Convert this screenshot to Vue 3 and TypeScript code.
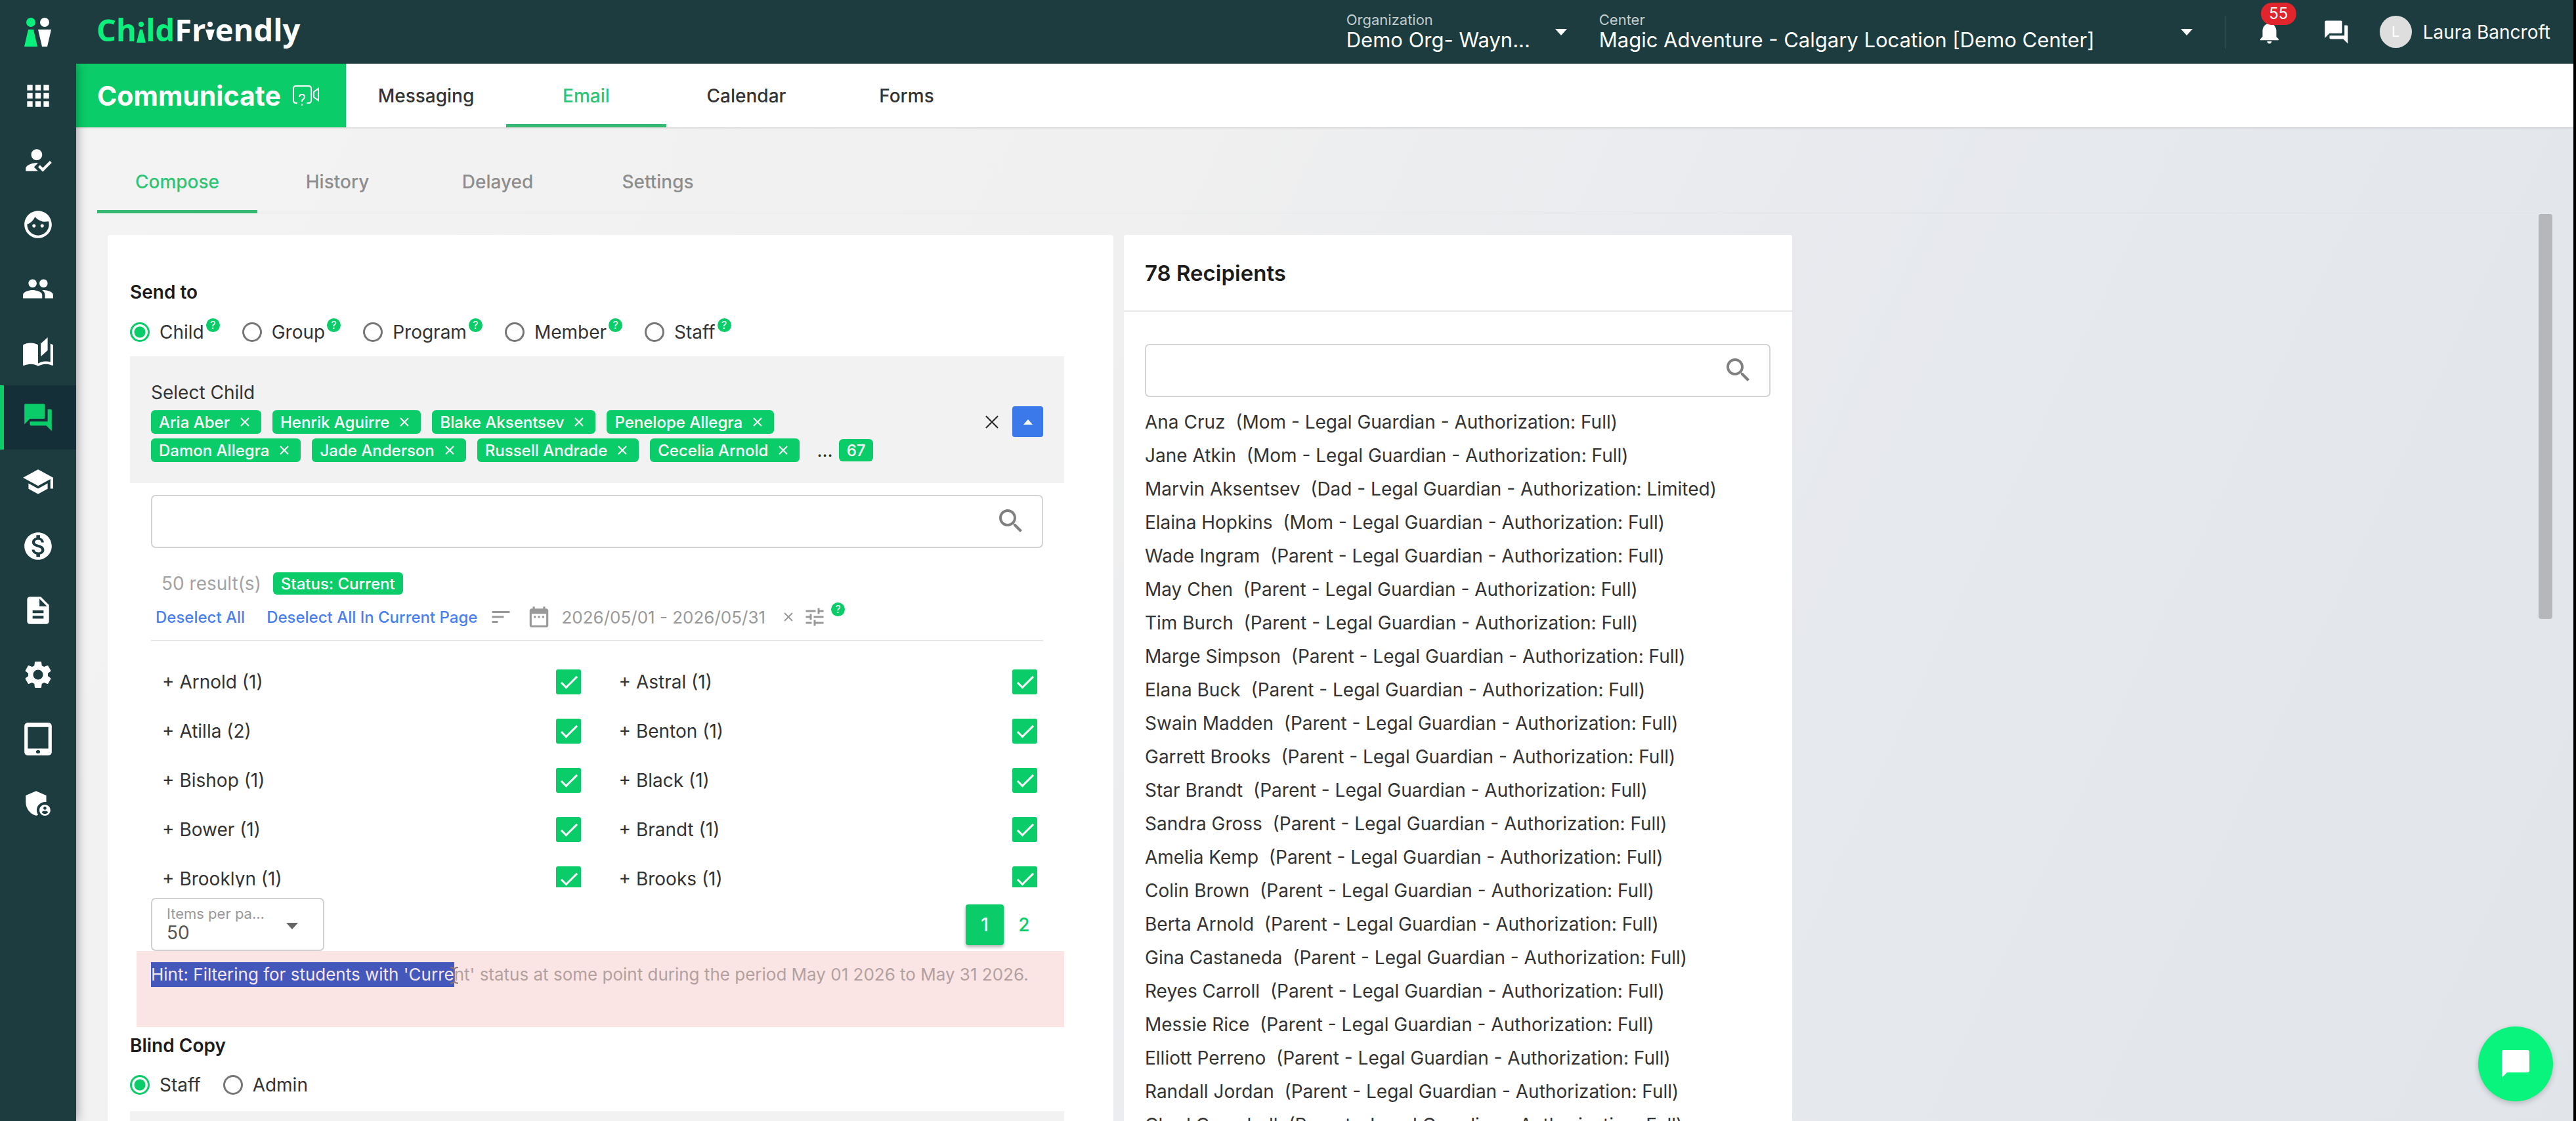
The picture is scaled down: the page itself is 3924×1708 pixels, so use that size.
<script setup lang="ts">
import { ref } from 'vue'

interface NavItem {
  name: string
  path: string
}

const navItems: NavItem[] = [
  { name: 'Apps', path: 'M4 4h4v4H4zM10 4h4v4h-4zM16 4h4v4h-4zM4 10h4v4H4zM10 10h4v4h-4zM16 10h4v4h-4zM4 16h4v4H4zM10 16h4v4h-4zM16 16h4v4h-4z' },
  { name: 'Attendance', path: 'M9 17l3-2.94c-.39-.04-.68-.06-1-.06-2.67 0-8 1.34-8 4v2h9l-3-3zm2-5c2.21 0 4-1.79 4-4s-1.79-4-4-4-4 1.79-4 4 1.79 4 4 4zM15.47 20.5L12 17l1.4-1.41 2.07 2.08 5.13-5.17 1.4 1.41z' },
  { name: 'Children', path: 'M10.25 13c0 .69-.56 1.25-1.25 1.25S7.75 13.69 7.75 13s.56-1.25 1.25-1.25 1.25.56 1.25 1.25zM15 11.75c-.69 0-1.25.56-1.25 1.25s.56 1.25 1.25 1.25 1.25-.56 1.25-1.25-.56-1.25-1.25-1.25zm7 .25c0 5.52-4.48 10-10 10S2 17.52 2 12 6.48 2 12 2s10 4.48 10 10zm-2 0c0-.78-.12-1.53-.33-2.24-.7.15-1.42.24-2.17.24-3.13 0-5.92-1.44-7.76-3.69C8.69 8.87 6.6 10.88 4 11.86c.01.04 0 .09 0 .14 0 4.41 3.59 8 8 8s8-3.59 8-8z' },
  { name: 'People', path: 'M16 11c1.66 0 2.99-1.34 2.99-3S17.66 5 16 5c-1.66 0-3 1.34-3 3s1.34 3 3 3zm-8 0c1.66 0 2.99-1.34 2.99-3S9.66 5 8 5C6.34 5 5 6.34 5 8s1.34 3 3 3zm0 2c-2.33 0-7 1.17-7 3.5V19h14v-2.5c0-2.33-4.67-3.5-7-3.5zm8 0c-.29 0-.62.02-.97.05 1.16.84 1.97 1.97 1.97 3.45V19h6v-2.5c0-2.33-4.67-3.5-7-3.5z' },
  { name: 'Curriculum', path: 'M19 .5l-5 4.5v9.5l5-4.5V.5zM1 6v14.65c0 .25.25.5.5.5.1 0 .15-.05.25-.05C3.1 20.45 5.05 20 6.5 20c1.95 0 4.05.4 5.5 1.5V6c-1.45-1.1-3.55-1.5-5.5-1.5-1.95 0-4.05.4-5.5 1.5zm22 13.5V6c-.6-.45-1.25-.75-2-1v13.5c-1.1-.35-2.3-.5-3.5-.5-1.7 0-4.15.65-5.5 1.5v2c1.35-.85 3.8-1.5 5.5-1.5 1.65 0 3.35.3 4.75 1.05.1.05.15.05.25.05.25 0 .5-.25.5-.5v-1.1z' },
  { name: 'Communicate', path: 'M21 6h-2v9H6v2c0 .55.45 1 1 1h11l4 4V7c0-.55-.45-1-1-1zm-4 6V3c0-.55-.45-1-1-1H3c-.55 0-1 .45-1 1v14l4-4h10c.55 0 1-.45 1-1z' },
  { name: 'School', path: 'M5 13.18v4L12 21l7-3.82v-4L12 17l-7-3.82zM12 3L1 9l11 6 9-4.91V17h2V9L12 3z' },
  { name: 'Billing', path: 'M12 2C6.48 2 2 6.48 2 12s4.48 10 10 10 10-4.48 10-10S17.52 2 12 2zm1.41 16.09V20h-2.67v-1.93c-1.71-.36-3.16-1.46-3.27-3.4h1.96c.1 1.05.82 1.87 2.65 1.87 1.96 0 2.4-.98 2.4-1.59 0-.83-.44-1.61-2.67-2.14-2.48-.6-4.18-1.62-4.18-3.67 0-1.72 1.39-2.84 3.11-3.21V4h2.67v1.95c1.86.45 2.79 1.86 2.85 3.39H14.3c-.05-1.11-.64-1.87-2.22-1.87-1.5 0-2.4.68-2.4 1.64 0 .84.65 1.39 2.67 1.91s4.18 1.39 4.18 3.91c-.01 1.83-1.38 2.83-3.12 3.16z' },
  { name: 'Documents', path: 'M14 2H6c-1.1 0-1.99.9-1.99 2L4 20c0 1.1.89 2 1.99 2H18c1.1 0 2-.9 2-2V8l-6-6zm2 16H8v-2h8v2zm0-4H8v-2h8v2zm-3-5V3.5L18.5 9H13z' },
  { name: 'Settings', path: 'M19.14 12.94c.04-.3.06-.61.06-.94 0-.32-.02-.64-.07-.94l2.03-1.58c.18-.14.23-.41.12-.61l-1.92-3.32c-.12-.22-.37-.29-.59-.22l-2.39.96c-.5-.38-1.03-.7-1.62-.94l-.36-2.54c-.04-.24-.24-.41-.48-.41h-3.84c-.24 0-.43.17-.47.41l-.36 2.54c-.59.24-1.13.57-1.62.94l-2.39-.96c-.22-.08-.47 0-.59.22L2.74 8.87c-.12.21-.08.47.12.61l2.03 1.58c-.05.3-.09.63-.09.94s.02.64.07.94l-2.03 1.58c-.18.14-.23.41-.12.61l1.92 3.32c.12.22.37.29.59.22l2.39-.96c.5.38 1.03.7 1.62.94l.36 2.54c.05.24.24.41.48.41h3.84c.24 0 .44-.17.47-.41l.36-2.54c.59-.24 1.13-.56 1.62-.94l2.39.96c.22.08.47 0 .59-.22l1.92-3.32c.12-.22.07-.47-.12-.61l-2.01-1.58zM12 15.6c-1.98 0-3.6-1.62-3.6-3.6s1.62-3.6 3.6-3.6 3.6 1.62 3.6 3.6-1.62 3.6-3.6 3.6z' },
  { name: 'Kiosk', path: 'M19.5 0h-15C3.1 0 2 1.1 2 2.5v19C2 22.9 3.1 24 4.5 24h15c1.4 0 2.5-1.1 2.5-2.5v-19C22 1.1 20.9 0 19.5 0zM12 22.6c-.8 0-1.5-.5-1.5-1.3S11.2 20 12 20s1.5.5 1.5 1.3-.7 1.3-1.5 1.3zM19.5 19h-15V3.2h15z' },
  { name: 'Admin', path: 'M17 11c.34 0 .67.04 1 .09V6.27L10.5 3 3 6.27v4.91c0 4.54 3.2 8.79 7.5 9.82.55-.13 1.08-.32 1.6-.55-.69-.98-1.1-2.17-1.1-3.45 0-3.31 2.69-6 6-6zM17 13c-2.21 0-4 1.79-4 4s1.79 4 4 4 4-1.79 4-4-1.79-4-4-4zm0 1.38c.62 0 1.12.51 1.12 1.12s-.51 1.12-1.12 1.12-1.12-.51-1.12-1.12.5-1.12 1.12-1.12zm0 5.37c-.93 0-1.74-.46-2.24-1.17.05-.72 1.51-1.08 2.24-1.08s2.19.36 2.24 1.08c-.5.71-1.31 1.17-2.24 1.17z' },
]

const forumPath = navItems[5].path
const bellPath = 'M12 22c1.1 0 2-.9 2-2h-4c0 1.1.89 2 2 2zm6-6v-5c0-3.07-1.64-5.64-4.5-6.32V4c0-.83-.67-1.5-1.5-1.5s-1.5.67-1.5 1.5v.68C7.63 5.36 6 7.92 6 11v5l-2 2v1h16v-1l-2-2z'
const searchPath = 'M15.5 14h-.79l-.28-.27C15.41 12.59 16 11.11 16 9.5 16 5.91 13.09 3 9.5 3S3 5.91 3 9.5 5.91 16 9.5 16c1.61 0 3.09-.59 4.23-1.57l.27.28v.79l5 4.99L20.49 19l-4.99-5zm-6 0C7.01 14 5 11.99 5 9.5S7.01 5 9.5 5 14 7.01 14 9.5 11.99 14 9.5 14z'
const calendarPath = 'M9 11H7v2h2v-2zm4 0h-2v2h2v-2zm4 0h-2v2h2v-2zm2-7h-1V2h-2v2H8V2H6v2H5c-1.11 0-1.99.9-1.99 2L3 20c0 1.1.89 2 2 2h14c1.1 0 2-.9 2-2V6c0-1.1-.9-2-2-2zm0 16H5V9h14v11z'
const tunePath = 'M3 17v2h6v-2H3zM3 5v2h10V5H3zm10 16v-2h8v-2h-8v-2h-2v6h2zM7 9v2H3v2h4v2h2V9H7zm14 4v-2H11v2h10zm-6-4h2V7h4V5h-4V3h-2v6z'

const mainTabs = ['Messaging', 'Email', 'Calendar', 'Forms']
const subTabs = ['Compose', 'History', 'Delayed', 'Settings']
const sendOptions = ['Child', 'Group', 'Program', 'Member', 'Staff']
const copyOptions = ['Staff', 'Admin']
const sendTo = ref('Child')
const copyTo = ref('Staff')

const chipRows = [
  ['Aria Aber', 'Henrik Aguirre', 'Blake Aksentsev', 'Penelope Allegra'],
  ['Damon Allegra', 'Jade Anderson', 'Russell Andrade', 'Cecelia Arnold'],
]

const families = ref(
  ['Arnold (1)', 'Astral (1)', 'Atilla (2)', 'Benton (1)', 'Bishop (1)', 'Black (1)', 'Bower (1)', 'Brandt (1)', 'Brooklyn (1)', 'Brooks (1)']
    .map((label) => ({ label, checked: true })),
)

const recipients: [string, string, string][] = [
  ['Ana Cruz', 'Mom', 'Full'],
  ['Jane Atkin', 'Mom', 'Full'],
  ['Marvin Aksentsev', 'Dad', 'Limited'],
  ['Elaina Hopkins', 'Mom', 'Full'],
  ['Wade Ingram', 'Parent', 'Full'],
  ['May Chen', 'Parent', 'Full'],
  ['Tim Burch', 'Parent', 'Full'],
  ['Marge Simpson', 'Parent', 'Full'],
  ['Elana Buck', 'Parent', 'Full'],
  ['Swain Madden', 'Parent', 'Full'],
  ['Garrett Brooks', 'Parent', 'Full'],
  ['Star Brandt', 'Parent', 'Full'],
  ['Sandra Gross', 'Parent', 'Full'],
  ['Amelia Kemp', 'Parent', 'Full'],
  ['Colin Brown', 'Parent', 'Full'],
  ['Berta Arnold', 'Parent', 'Full'],
  ['Gina Castaneda', 'Parent', 'Full'],
  ['Reyes Carroll', 'Parent', 'Full'],
  ['Messie Rice', 'Parent', 'Full'],
  ['Elliott Perreno', 'Parent', 'Full'],
  ['Randall Jordan', 'Parent', 'Full'],
  ['Chad Campbell', 'Parent', 'Full'],
]
</script>

<template>
  <div class="shell">
    <header class="topbar">
      <a class="mark" href="#" aria-label="Home">
        <svg viewBox="0 0 42 44">
          <circle cx="10" cy="7" r="7" fill="#0bf07c" />
          <path d="M6 18h8l6 26H0z" fill="#0bf07c" />
          <circle cx="31" cy="7" r="7" fill="#fff" />
          <path d="M21 18h20l-6 26h-8z" fill="#fff" />
        </svg>
      </a>
      <a class="wordmark" href="#">
        <span class="green">Ch<span class="figure">i<svg viewBox="0 0 14 32"><circle cx="7" cy="4" r="4" /><path d="M5 12h4l5 20H0z" /></svg></span>ld</span><span>Fr<span class="figure">i<svg viewBox="0 0 14 32"><circle cx="7" cy="4" r="4" /><path d="M0 12h14L9 28H5z" /></svg></span>endly</span>
      </a>

      <div class="field org">
        <label for="org">Organization</label>
        <select id="org"><option>Demo Org- Wayn...</option></select>
        <svg class="caret" viewBox="0 0 18 10"><path d="M0 0h18l-9 10z" /></svg>
      </div>
      <div class="field center">
        <label for="center">Center</label>
        <select id="center"><option>Magic Adventure - Calgary Location [Demo Center]</option></select>
        <svg class="caret" viewBox="0 0 18 10"><path d="M0 0h18l-9 10z" /></svg>
      </div>
      <div class="rule"></div>
      <button class="icon-btn bell" type="button" aria-label="Notifications">
        <svg viewBox="0 0 24 24"><path :d="bellPath" /></svg>
        <span class="count">55</span>
      </button>
      <button class="icon-btn" type="button" aria-label="Messages">
        <svg viewBox="0 0 24 24"><path :d="forumPath" /></svg>
      </button>
      <a class="user" href="#"><span class="avatar">L</span>Laura Bancroft</a>
    </header>

    <div class="body">
      <nav class="sidebar">
        <a v-for="item in navItems" :key="item.name" href="#" :aria-label="item.name" :class="{ active: item.name === 'Communicate' }">
          <svg viewBox="0 0 24 24"><path :d="item.path" fill-rule="evenodd" /></svg>
        </a>
      </nav>

      <div class="page">
        <div class="module-bar">
          <h1>
            Communicate
            <svg viewBox="0 0 42 34" fill="none" stroke="currentColor" stroke-width="2">
              <path d="M8 28H6q-4 0-4-4V6q0-4 4-4h19q4 0 4 4v18q0 4-4 4h-3" />
              <path d="M40 6v18l-7-5v-8z" />
              <path d="M11 19q0-4 4-4t4 4q0 2-2 3t-2 4M15 29v3" />
            </svg>
          </h1>
          <a v-for="tab in mainTabs" :key="tab" href="#" class="tab" :class="{ active: tab === 'Email' }">{{ tab }}</a>
        </div>

        <div class="sub-bar">
          <a v-for="tab in subTabs" :key="tab" href="#" class="tab" :class="{ active: tab === 'Compose' }">{{ tab }}</a>
        </div>

        <main class="columns">
          <section class="card compose">
            <h2>Send to</h2>
            <div class="radios">
              <div v-for="option in sendOptions" :key="option" class="radio">
                <input :id="'to-' + option" v-model="sendTo" type="radio" name="send-to" :value="option">
                <label :for="'to-' + option">{{ option }}</label>
                <span class="help">?</span>
              </div>
            </div>

            <div class="picker">
              <div class="picked">
                <div class="picker-title">Select Child</div>
                <div v-for="(row, index) in chipRows" :key="index" class="chips">
                  <span v-for="chip in row" :key="chip" class="chip">
                    {{ chip }}
                    <button type="button" :aria-label="'Remove ' + chip"><svg viewBox="0 0 14 14"><path d="M1 1l12 12M13 1L1 13" /></svg></button>
                  </span>
                  <template v-if="index === 1">
                    <span class="dots">...</span>
                    <span class="chip total">67</span>
                  </template>
                </div>
              </div>
              <button class="clear" type="button" aria-label="Clear all"><svg viewBox="0 0 20 20"><path d="M1 1l18 18M19 1L1 19" /></svg></button>
              <button class="toggle" type="button" aria-label="Collapse"><svg viewBox="0 0 14 8"><path d="M7 0l7 8H0z" /></svg></button>
            </div>

            <div class="inner">
              <div class="search">
                <input type="text" aria-label="Search children">
                <svg viewBox="0 0 24 24"><path :d="searchPath" /></svg>
              </div>
              <div class="results">
                <span>50 result(s)</span>
                <span class="chip status">Status: Current</span>
              </div>
              <div class="actions">
                <a href="#">Deselect All</a>
                <a href="#" class="page-link">Deselect All In Current Page</a>
                <svg class="sort" viewBox="0 0 24 24"><path d="M3 18h6v-2H3v2zM3 6v2h18V6H3zm0 7h12v-2H3v2z" /></svg>
                <svg class="calendar" viewBox="0 0 24 24"><path :d="calendarPath" /></svg>
                <span class="dates">2026/05/01 - 2026/05/31</span>
                <svg class="cross" viewBox="0 0 14 14"><path d="M1 1l12 12M13 1L1 13" /></svg>
                <svg class="tune" viewBox="0 0 24 24"><path :d="tunePath" /></svg>
                <span class="help">?</span>
              </div>
              <div class="families">
                <div v-for="(family, index) in families" :key="family.label" class="family">
                  <label :for="'family-' + index">+ {{ family.label }}</label>
                  <input :id="'family-' + index" v-model="family.checked" type="checkbox">
                </div>
              </div>
              <div class="paging">
                <div class="per-page">
                  <label for="per-page">Items per pa...</label>
                  <select id="per-page"><option>50</option></select>
                  <svg class="caret" viewBox="0 0 18 10"><path d="M0 0h18l-9 10z" /></svg>
                </div>
                <button class="current" type="button">1</button>
                <button type="button">2</button>
              </div>
            </div>

            <p class="hint">
              <span class="selected">Hint: Filtering for students with 'Curre<svg class="ibeam" viewBox="0 0 14 26"><path d="M1 1q6 0 6 4v16q0 4-6 4M13 1q-6 0-6 4v16q0 4 6 4" /></svg></span>nt' status at some point during the period May 01 2026 to May 31 2026.
            </p>

            <h2 class="blind">Blind Copy</h2>
            <div class="radios">
              <div v-for="option in copyOptions" :key="option" class="radio">
                <input :id="'copy-' + option" v-model="copyTo" type="radio" name="copy-to" :value="option">
                <label :for="'copy-' + option">{{ option }}</label>
              </div>
            </div>
            <div class="picker next"></div>
          </section>

          <section class="card recipients">
            <h2>78 Recipients</h2>
            <div class="recipient-body">
              <div class="search">
                <input type="text" aria-label="Search recipients">
                <svg viewBox="0 0 24 24"><path :d="searchPath" /></svg>
              </div>
              <ul>
                <li v-for="[name, role, level] in recipients" :key="name">{{ name }}&nbsp; ({{ role }} - Legal Guardian - Authorization: {{ level }})</li>
              </ul>
            </div>
          </section>
        </main>
        <div class="scroll-thumb"></div>
      </div>
    </div>

    <button class="fab" type="button" aria-label="Open chat">
      <svg viewBox="0 0 42 42"><path d="M3 0h36q3 0 3 3v28q0 3-3 3H8l-8 8V3q0-3 3-3z" /></svg>
    </button>
  </div>
</template>

<style>
body {
  background: #000;
}
</style>

<style scoped>
.shell {
  position: relative;
  display: flex;
  flex-direction: column;
  height: 100vh;
  margin-right: 4px;
  overflow: hidden;
  font-family: Inter, "Liberation Sans", sans-serif;
  font-size: 28px;
  color: #333;
}
.shell *,
.shell *::before {
  box-sizing: border-box;
}
svg {
  display: block;
  flex: none;
  fill: currentColor;
}
a {
  color: inherit;
  text-decoration: none;
}
button {
  padding: 0;
  border: 0;
  background: none;
  font: inherit;
  color: inherit;
}
select {
  appearance: none;
  border: 0;
  padding: 0;
  width: 100%;
  background: none;
  font: inherit;
  color: inherit;
}
h1, h2, p, ul {
  margin: 0;
  padding: 0;
}

/* Top bar */
.topbar {
  display: flex;
  align-items: center;
  flex: none;
  height: 97px;
  padding-right: 35px;
  background: #1c3c40;
  color: #fff;
}
.mark {
  width: 147px;
  padding-left: 37px;
}
.mark svg {
  width: 42px;
  height: 44px;
}
.wordmark {
  margin-right: auto;
  padding-bottom: 8px;
  font: 700 47px/64px "Open Sans", "Noto Sans", sans-serif;
}
.wordmark .green {
  color: #0bf07c;
}
.figure {
  position: relative;
  -webkit-text-fill-color: transparent;
}
.figure svg {
  position: absolute;
  left: 0;
  bottom: 12px;
  width: 14px;
  height: 32px;
}
.field {
  position: relative;
  margin-right: 49px;
}
.field.org {
  width: 336px;
}
.field.center {
  width: 904px;
}
.field label {
  display: block;
  font-size: 22px;
  line-height: 24px;
  color: #c3cdce;
}
.field select {
  display: block;
  height: 38px;
  font-size: 31px;
}
.caret {
  position: absolute;
  width: 18px;
  height: 10px;
  pointer-events: none;
}
.field .caret {
  right: 0;
  top: 26px;
}
.rule {
  width: 1px;
  height: 50px;
  margin-right: 46px;
  background: #3f5b5e;
}
.icon-btn {
  position: relative;
  margin-right: 60px;
}
.icon-btn svg {
  width: 42px;
  height: 42px;
}
.icon-btn + .user {
  margin-left: -15px;
}
.count {
  position: absolute;
  left: 8px;
  top: -24px;
  width: 54px;
  height: 34px;
  border-radius: 17px;
  background: #e0252c;
  font-size: 24px;
  line-height: 34px;
}
.user {
  display: flex;
  align-items: center;
  gap: 17px;
}
.avatar {
  width: 49px;
  height: 49px;
  border-radius: 50%;
  background: #dedede;
  font-size: 22px;
  line-height: 49px;
  text-align: center;
}

/* Sidebar */
.body {
  display: flex;
  flex: 1;
  min-height: 0;
}
.sidebar {
  position: relative;
  z-index: 1;
  flex: none;
  width: 116px;
  background: #1c3c40;
  color: #fff;
  box-shadow: 0 0 16px rgba(0, 0, 0, 0.4);
  clip-path: inset(0 -30px 0 0);
}
.sidebar a {
  display: flex;
  align-items: center;
  justify-content: center;
  height: 98px;
}
.sidebar svg {
  width: 50px;
  height: 50px;
}
.sidebar .active {
  border-left: 6px solid #0acc69;
  padding-right: 6px;
  background: #152f38;
  color: #0acc69;
}

/* Tabs */
.page {
  position: relative;
  flex: 1;
  min-width: 0;
  background: linear-gradient(115deg, #f3f3f3 0%, #f0f0f0 38%, #e8eaee 60%, #e1e5ea 100%);
}
.module-bar,
.sub-bar {
  display: flex;
}
.module-bar {
  height: 97px;
  background: #fff;
  box-shadow: 0 1px 3px rgba(0, 0, 0, 0.15);
}
h1 {
  display: flex;
  align-items: center;
  gap: 17px;
  width: 411px;
  padding-left: 32px;
  background: #0acc69;
  color: #fff;
  font-size: 41px;
  font-weight: 700;
}
h1 svg {
  width: 42px;
  height: 34px;
  fill: none;
}
.tab {
  display: flex;
  align-items: center;
  justify-content: center;
  width: 244px;
  border-bottom: 5px solid transparent;
  padding-top: 5px;
  font-weight: 500;
}
.tab.active {
  border-color: #34b872;
  color: #2fc474;
}
.sub-bar {
  height: 131px;
  margin: 0 48px 0 32px;
  border-bottom: 1px solid #dfe1e3;
}
.sub-bar .tab {
  height: 131px;
  padding-top: 40px;
  color: #8d8d8d;
}
.sub-bar .tab.active {
  color: #2fc474;
}

/* Cards */
.columns {
  display: grid;
  grid-template-columns: 1532fr 1018fr 1126fr;
  gap: 16px;
  padding: 33px 48px 0;
}
.card {
  border-radius: 4px;
  background: #fff;
}
.compose {
  padding: 67px 75px 0 34px;
}
h2 {
  font-size: 28px;
  line-height: 40px;
  font-weight: 600;
  color: #1c1c1c;
}
.radios {
  display: flex;
  gap: 34px;
  height: 34px;
  margin-top: 24px;
}
.radio {
  display: flex;
  align-items: center;
}
.radio input {
  appearance: none;
  width: 30px;
  height: 30px;
  margin: 0 15px 0 0;
  border: 3px solid #777;
  border-radius: 50%;
}
.radio input:checked {
  border-color: #0acc69;
  background: radial-gradient(circle, #0acc69 8px, transparent 9px);
}
.help {
  align-self: flex-start;
  width: 21px;
  height: 21px;
  margin-left: 3px;
  border-radius: 50%;
  background: #0acc69;
  color: #fff;
  font-size: 16px;
  line-height: 21px;
  text-align: center;
}
.radio .help {
  margin-top: -4px;
}
.picker {
  display: flex;
  align-items: center;
  margin-top: 20px;
  padding: 38px 32px;
  padding-bottom: 32px;
  background: #f2f2f2;
}
.picked {
  flex: 1;
}
.picker-title {
  line-height: 34px;
  margin-bottom: 10px;
}
.chips {
  display: flex;
  align-items: center;
  gap: 17px;
}
.chips + .chips {
  margin-top: 7px;
}
.chip {
  display: flex;
  align-items: center;
  gap: 16px;
  height: 36px;
  padding: 0 18px 0 12px;
  border-radius: 6px;
  background: #0acc69;
  color: #fff;
  font-size: 24px;
  font-weight: 500;
}
.chip svg {
  width: 14px;
  height: 14px;
}
.chip path,
.clear path,
.cross path {
  fill: none;
  stroke: currentColor;
  stroke-width: 2;
}
.chip.total,
.chip.status {
  height: 34px;
  padding: 0 12px;
}
.chip.total {
  margin-left: -8px;
}
.dots {
  margin-left: 9px;
}
.clear {
  margin-right: 21px;
  color: #222;
}
.clear svg {
  width: 20px;
  height: 20px;
}
.toggle {
  display: grid;
  place-items: center;
  width: 47px;
  height: 47px;
  border-radius: 4px;
  background: #3b78e9;
  color: #fff;
}
.toggle svg {
  width: 14px;
  height: 8px;
}
.inner {
  margin: 18px 32px 0;
}
.search {
  position: relative;
  height: 81px;
}
.search input {
  display: block;
  width: 100%;
  height: 100%;
  border: 2px solid #d4d4d4;
  border-radius: 7px;
  background: #fff;
  padding: 0 80px 0 20px;
  font: inherit;
}
.search svg {
  position: absolute;
  right: 25px;
  top: 16px;
  width: 48px;
  height: 48px;
  color: #808080;
}
.results {
  display: flex;
  align-items: center;
  gap: 18px;
  margin-top: 37px;
  padding-left: 16px;
  color: #a3a3a3;
}
.actions {
  display: flex;
  align-items: center;
  height: 55px;
  margin-top: 16px;
  padding: 0 0 17px 7px;
  border-bottom: 2px solid #e6e6e6;
  color: #999;
}
.actions a {
  font-size: 24px;
  font-weight: 500;
  color: #4a80ee;
}
.page-link {
  margin-left: 33px;
}
.sort {
  width: 36px;
  height: 36px;
  margin-left: 18px;
}
.calendar {
  width: 38px;
  height: 38px;
  margin-left: 21px;
}
.dates {
  margin-left: 15px;
  font-size: 26px;
}
.cross {
  width: 14px;
  height: 14px;
  margin-left: 28px;
}
.tune {
  width: 36px;
  height: 36px;
  margin-left: 15px;
}
.actions .help {
  margin-top: -4px;
  margin-left: 7px;
}
.families {
  display: grid;
  grid-template-columns: 1fr 1fr;
  grid-auto-rows: 75px;
  column-gap: 58px;
  height: 375px;
  padding: 24px 9px 0 17px;
  overflow: hidden;
}
.family {
  display: flex;
  align-items: center;
  justify-content: space-between;
}
.family input {
  appearance: none;
  position: relative;
  width: 38px;
  height: 38px;
  margin: 0;
  border: 2px solid #0acc69;
  border-radius: 3px;
}
.family input:checked {
  background: #0acc69;
}
.family input:checked::before {
  content: "";
  position: absolute;
  left: 12px;
  top: 2px;
  width: 12px;
  height: 25px;
  border: solid #fff;
  border-width: 0 3px 3px 0;
  transform: rotate(45deg);
}
.paging {
  display: flex;
  align-items: center;
  margin-top: 16px;
}
.per-page {
  position: relative;
  width: 264px;
  height: 81px;
  margin-right: auto;
  padding: 10px 0 0 22px;
  border: 2px solid #d0d0d0;
  border-radius: 7px;
}
.per-page label {
  display: block;
  font-size: 22px;
  line-height: 24px;
  color: #999;
}
.per-page select {
  display: block;
  height: 34px;
  color: #555;
}
.per-page .caret {
  right: 38px;
  top: 36px;
  color: #666;
}
.paging button {
  width: 58px;
  height: 62px;
  border-radius: 4px;
  color: #0acc69;
  font-weight: 500;
}
.paging .current {
  background: #0acc69;
  color: #fff;
  box-shadow: 0 3px 5px rgba(0, 0, 0, 0.3);
}
.paging button:last-child {
  margin-left: 2px;
}
.hint {
  height: 116px;
  margin-left: 10px;
  padding: 17px 0 0 22px;
  background: #fae5e4;
  color: #b3a0a0;
  font-size: 26px;
  line-height: 38px;
  white-space: nowrap;
}
.selected {
  position: relative;
  display: inline-block;
  background: #4457ba;
  color: #f3e6ee;
}
.ibeam {
  position: absolute;
  right: -7px;
  top: 7px;
  width: 14px;
  height: 26px;
}
.ibeam path {
  fill: none;
  stroke: #8d7777;
  stroke-width: 2;
}
.blind {
  margin-top: 8px;
}
.blind + .radios {
  margin-top: 23px;
}
.picker.next {
  height: 193px;
  margin-top: 23px;
}

/* Recipients */
.recipients h2 {
  padding: 38px 32px 37px;
  border-bottom: 2px solid #e6e6e6;
  font-size: 33px;
}
.recipient-body {
  padding: 49px 33px 0 32px;
}
ul {
  margin-top: 13px;
  list-style: none;
}
li {
  line-height: 51px;
  white-space: nowrap;
}

.scroll-thumb {
  position: absolute;
  right: 32px;
  top: 229px;
  width: 21px;
  height: 617px;
  border-radius: 4px;
  background: #b5b7ba;
}
.fab {
  position: absolute;
  right: 31px;
  bottom: 30px;
  display: grid;
  place-items: center;
  width: 114px;
  height: 114px;
  border-radius: 50%;
  background: #08f47c;
  color: #fff;
  box-shadow: 0 3px 8px rgba(0, 0, 0, 0.2);
}
.fab svg {
  width: 42px;
  height: 42px;
}
</style>
